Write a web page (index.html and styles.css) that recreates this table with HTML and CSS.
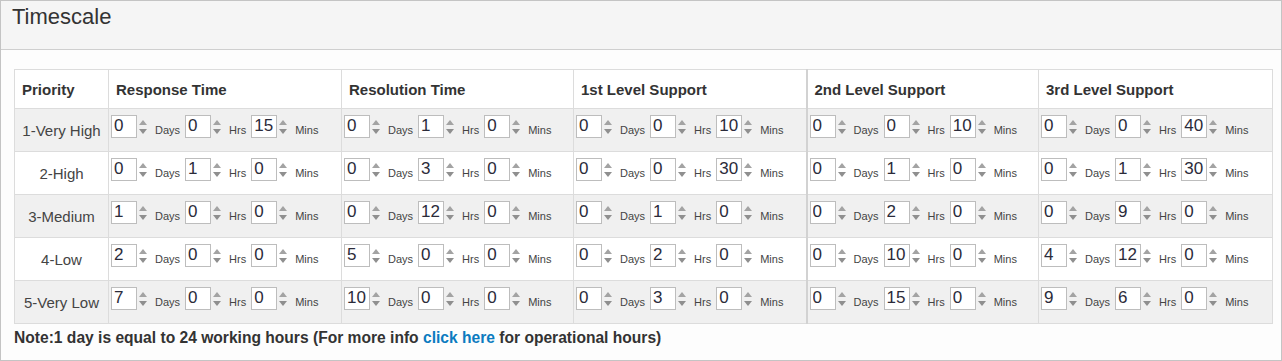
FILE: index.html
```html
<!DOCTYPE html>
<html>
<head>
<meta charset="utf-8">
<link rel="stylesheet" href="styles.css">
</head>
<body>
<div class="panel">
  <div class="panel-head"><h2 class="title">Timescale</h2></div>
  <div class="panel-body">
    <table class="ts">
      <colgroup>
        <col class="c-pri"><col class="c-a"><col class="c-b"><col class="c-a"><col class="c-b"><col class="c-c">
      </colgroup>
      <thead>
        <tr><th>Priority</th><th>Response Time</th><th>Resolution Time</th><th>1st Level Support</th><th class="sep">2nd Level Support</th><th>3rd Level Support</th></tr>
      </thead>
      <tbody id="rows"></tbody>
    </table>
    <p class="note">Note:1 day is equal to 24 working hours (For more info <a class="link" href="#">click here</a> for operational hours)</p>
  </div>
</div>
<script src="app.js"></script>
</body>
</html>
```
FILE: app.js
```js
var data = [
  ["1-Very High", [[0,0,15],[0,1,0],[0,0,10],[0,0,10],[0,0,40]]],
  ["2-High", [[0,1,0],[0,3,0],[0,0,30],[0,1,0],[0,1,30]]],
  ["3-Medium", [[1,0,0],[0,12,0],[0,1,0],[0,2,0],[0,9,0]]],
  ["4-Low", [[2,0,0],[5,0,0],[0,2,0],[0,10,0],[4,12,0]]],
  ["5-Very Low", [[7,0,0],[10,0,0],[0,3,0],[0,15,0],[9,6,0]]]
];
var labels = ["Days", "Hrs", "Mins"];
var spin = '<svg class="spin" width="12" height="23" viewBox="0 0 12 23"><polygon points="2,10 10,10 6,5" fill="#a3a3a3"/><polygon points="2,14 10,14 6,19" fill="#8f8f8f"/></svg>';
var html = "";
data.forEach(function (r) {
  html += '<tr><td class="pri">' + r[0] + '</td>';
  r[1].forEach(function (g, i) {
    html += '<td class="tc' + (i === 3 ? ' sep' : '') + '"><div class="grp">';
    g.forEach(function (v, k) {
      html += '<input class="num" type="text" value="' + v + '">' + spin + '<span class="unit">' + labels[k] + '</span>';
    });
    html += '</div></td>';
  });
  html += '</tr>';
});
document.getElementById("rows").innerHTML = html;
```
FILE: styles.css
```css
html, body {
  margin: 0;
  padding: 0;
  background: #fff;
}
body {
  font-family: "Liberation Sans", Arial, sans-serif;
  color: #333;
}
.panel {
  width: 1280px;
  height: 359px;
  border: 1px solid #c4c4c4;
  background: #fdfdfd;
}
.panel-head {
  height: 48px;
  background: #f5f5f5;
  border-bottom: 1px solid #cfcfcf;
}
.title {
  margin: 0;
  padding: 3px 0 0 11px;
  font-size: 22px;
  font-weight: normal;
  line-height: 26px;
  color: #333;
}
.panel-body {
  padding: 19px 9px 0 13px;
}
.ts {
  border-collapse: collapse;
  table-layout: fixed;
  width: 1258px;
}
.c-pri { width: 94px; }
.c-a { width: 233px; }
.c-b { width: 232px; }
.c-c { width: 234px; }
.ts th, .ts td {
  border: 1px solid #dcdcdc;
  padding: 0;
}
.ts th {
  height: 38px;
  text-align: left;
  padding-left: 7px;
  font-size: 15px;
  font-weight: bold;
  color: #333;
  background: #fff;
}
.ts th.sep, .ts td.sep {
  border-left: 2px solid #d2d2d2;
}
.ts tbody tr {
  height: 43px;
}
.ts tbody tr:nth-child(odd) td {
  background: #f0f0f0;
}
.ts tbody tr:nth-child(even) td {
  background: #fff;
}
.ts td.pri {
  text-align: center;
  font-size: 15px;
  color: #444;
}
.ts td.tc {
  vertical-align: top;
  padding: 6px 0 0 2px;
}
.grp {
  display: flex;
  align-items: flex-end;
}
.num {
  box-sizing: border-box;
  width: 26px;
  height: 23px;
  margin: 0;
  padding: 0 0 1px 2px;
  border: 1px solid #bdbdbd;
  background: #fff;
  font-family: "Liberation Sans", Arial, sans-serif;
  font-size: 17px;
  color: #2b2b3a;
  outline: none;
}
.spin {
  display: block;
  flex: none;
}
.unit {
  font-size: 11px;
  line-height: 13px;
  margin: 0 5px 1px 6px;
  color: #444;
}
.note {
  margin: 4px 0 0 0;
  font-size: 15.6px;
  font-weight: bold;
  line-height: 20px;
  color: #333;
}
.link {
  color: #0b7bc0;
  text-decoration: none;
}
```
